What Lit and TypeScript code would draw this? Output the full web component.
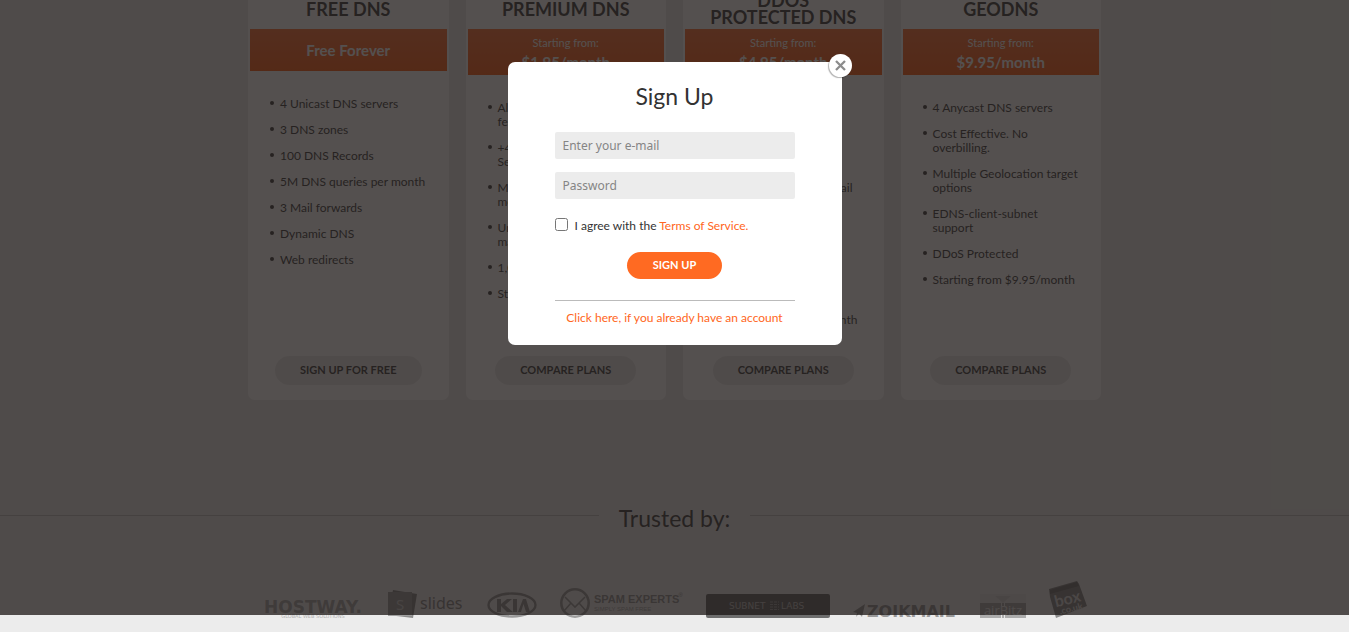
import { LitElement, html, css, svg, nothing } from "lit";
import { customElement, property, state } from "lit/decorators.js";

interface Plan {
  name: string[];
  from?: string;
  price: string;
  features: string[][];
  action: string;
}

const PLANS: Plan[] = [
  {
    name: ["FREE DNS"],
    price: "Free Forever",
    features: [
      ["4 Unicast DNS servers"],
      ["3 DNS zones"],
      ["100 DNS Records"],
      ["5M DNS queries per month"],
      ["3 Mail forwards"],
      ["Dynamic DNS"],
      ["Web redirects"],
    ],
    action: "SIGN UP FOR FREE",
  },
  {
    name: ["PREMIUM DNS"],
    from: "Starting from:",
    price: "$1.95/month",
    features: [
      ["All Free DNS", "features"],
      ["+45 Anycast DNS", "Servers"],
      ["Millions of queries per", "month"],
      ["Unlimited DNS records,", "mail forwards"],
      ["1,000% Uptime SLA"],
      ["Starting from $1.95/month"],
    ],
    action: "COMPARE PLANS",
  },
  {
    name: ["DDOS", "PROTECTED DNS"],
    from: "Starting from:",
    price: "$4.95/month",
    features: [
      ["All Premium DNS", "features"],
      ["DDoS protected DNS", "servers"],
      ["Unlimited DNS and E-mail", "forwards"],
      ["Unlimited DNS", "queries"],
      ["10,000% SLA"],
      ["24/7 Live Support"],
      ["Starting from $4.95/month"],
    ],
    action: "COMPARE PLANS",
  },
  {
    name: ["GEODNS"],
    from: "Starting from:",
    price: "$9.95/month",
    features: [
      ["4 Anycast DNS servers"],
      ["Cost Effective. No", "overbilling."],
      ["Multiple Geolocation target", "options"],
      ["EDNS-client-subnet", "support"],
      ["DDoS Protected"],
      ["Starting from $9.95/month"],
    ],
    action: "COMPARE PLANS",
  },
];

const lines = (parts: string[]) => parts.map((p, i) => html`${i ? html`<br />` : nothing}${p}`);

@customElement("plan-card")
export class PlanCard extends LitElement {
  @property({ attribute: false }) plan!: Plan;

  static styles = css`
    :host {
      display: flex;
      flex-direction: column;
      align-items: center;
      box-sizing: border-box;
      padding: 20px 2px 15px;
      background: #fff;
      border-radius: 7px;
    }
    .name {
      display: flex;
      align-items: center;
      height: 40px;
      margin: 0;
      font-size: 18px;
      line-height: 17px;
      font-weight: 700;
      text-align: center;
    }
    .price {
      align-self: stretch;
      padding: 11px 0;
      background: linear-gradient(#ff7840, #ff6622);
      color: #fff;
      font-size: 15px;
      line-height: 20px;
      font-weight: 700;
      text-align: center;
    }
    .price.two {
      padding: 5px 0 3px;
    }
    .from {
      display: block;
      font-size: 11px;
      line-height: 18px;
      font-weight: 400;
    }
    .features {
      align-self: stretch;
      flex: 1;
      margin: 26px 0 0;
      padding: 0 0 0 30px;
      list-style: none;
    }
    .features li {
      position: relative;
      margin-bottom: 12px;
      font-size: 12px;
      line-height: 14px;
      white-space: nowrap;
    }
    .features li::before {
      content: "";
      position: absolute;
      left: -10px;
      top: 4px;
      width: 4px;
      height: 4px;
      border-radius: 50%;
      background: #4a4a4a;
    }
    .action {
      box-sizing: border-box;
      height: 29px;
      padding: 0 25px;
      border-radius: 15px;
      background: #ececec;
      color: inherit;
      font-size: 11px;
      line-height: 27px;
      font-weight: 700;
      text-decoration: none;
    }
  `;

  render() {
    const p = this.plan;
    return html`
      <h3 class="name"><span>${lines(p.name)}</span></h3>
      <div class="price ${p.from ? "two" : ""}">
        ${p.from ? html`<span class="from">${p.from}</span>` : nothing}${p.price}
      </div>
      <ul class="features">
        ${p.features.map((f) => html`<li>${lines(f)}</li>`)}
      </ul>
      <a class="action" href="#plans">${p.action}</a>
    `;
  }
}

const LOGOS = [
  {
    label: "Hostway",
    w: 103,
    h: 18,
    art: svg`
      <text x="51" y="13" text-anchor="middle" font-family="DejaVu Sans, sans-serif" font-weight="700" font-size="17" fill="#aaa">HOSTWAY.</text>
      <text x="51" y="18" text-anchor="middle" font-family="DejaVu Sans, sans-serif" font-size="5" fill="#b4b4b4">GLOBAL  WEB  SOLUTIONS</text>`,
  },
  {
    label: "Slides",
    w: 76,
    h: 28,
    art: svg`
      <path d="M5 0 29 4 25 28 0 25z" fill="#8c8c8c"/>
      <path d="M0 2h24v24H0z" fill="#a0a0a0"/>
      <text x="12" y="20" text-anchor="middle" font-family="Noto Sans, sans-serif" font-size="15" fill="#cfcfcf">S</text>
      <text x="32" y="19" font-family="Noto Sans, sans-serif" font-size="16" fill="#8c8c8c">slides</text>`,
  },
  {
    label: "KIA",
    w: 50,
    h: 26,
    art: svg`
      <ellipse cx="25" cy="13" rx="23.5" ry="11.5" fill="none" stroke="#999" stroke-width="2.4"/>
      <path d="M10 7h4v5l6-5h5l-7 6 8 7h-6l-6-6v6h-4zM26 7h4v13h-4zM31 20l5-13h3l4 13h-4l-2.500-8-2.500 8z" fill="#999"/>`,
  },
  {
    label: "Spam Experts",
    w: 123,
    h: 30,
    art: svg`
      <circle cx="15" cy="15" r="13.700" fill="none" stroke="#a0a0a0" stroke-width="2.600"/>
      <path d="M5 9l10 10L25 9M4 23l7-8M26 23l-7-8" fill="none" stroke="#a0a0a0" stroke-width="1.600"/>
      <text x="34" y="15" font-family="Liberation Sans, sans-serif" font-size="11" font-weight="700" fill="#999">SPAM EXPERTS</text>
      <text x="123" y="9" text-anchor="end" font-family="Liberation Sans, sans-serif" font-size="6" fill="#999">®</text>
      <text x="34" y="23" font-family="Liberation Sans, sans-serif" font-size="6" fill="#aaa">SIMPLY SPAM FREE</text>`,
  },
  {
    label: "Subnet Labs",
    w: 124,
    h: 24,
    art: svg`
      <rect width="124" height="24" rx="2" fill="#6e6e6e"/>
      <text x="23" y="15" font-family="DejaVu Sans, sans-serif" font-size="9" fill="#c0c0c0">SUBNET</text>
      <path d="M64 8h9M64 10.500h9M64 13h9M64 15.500h9" stroke="#a0a0a0" stroke-width="1" stroke-dasharray="3 1"/>
      <text x="75" y="15" font-family="DejaVu Sans, sans-serif" font-size="9" fill="#c0c0c0">LABS</text>`,
  },
  {
    label: "Zoikmail",
    w: 104,
    h: 16,
    art: svg`
      <path d="M0 10 12 2 9 15 6 11.500 3 15 4 11z" fill="#999"/>
      <text x="14" y="15" font-family="DejaVu Sans, sans-serif" font-weight="700" font-size="16" fill="#999">ZOIKMAIL</text>`,
  },
  {
    label: "airBitz",
    w: 46,
    h: 24,
    art: svg`
      <path d="M0 0h46v9H0z" fill="#e4e4e4"/>
      <path d="M15 2h16l-8 7z" fill="#d4d4d4"/>
      <path d="M0 9h46v15H0z" fill="#acacac"/>
      <path d="M21.500 9v3M24.500 9v3M21.500 21v3M24.500 21v3" stroke="#e8e8e8" stroke-width="1"/>
      <text x="23" y="21" text-anchor="middle" font-family="Open Sans, sans-serif" font-size="13" fill="#e8e8e8">airBitz</text>`,
  },
  {
    label: "box.co.uk",
    w: 38,
    h: 37,
    art: svg`
      <path d="M0 8 28 0l2 3 8 22-31 12L1 16z" fill="#8c8c8c"/>
      <path d="M1 9 28 1l2 4-29 8z" fill="#787878"/>
      <g transform="rotate(-14 20 20)" font-family="Lato, sans-serif" font-weight="700" text-anchor="middle" fill="#dcdcdc">
        <text x="19" y="23" font-size="16">box</text>
        <text x="20" y="31" font-size="9">.co.uk</text>
      </g>`,
  },
];

@customElement("sign-up-dialog")
export class SignUpDialog extends LitElement {
  static styles = css`
    :host {
      display: block;
      position: relative;
      box-sizing: border-box;
      width: 334px;
      max-width: 100%;
      padding: 19px 47px;
      background: #fff;
      border-radius: 7px;
      color: #333;
    }
    h2 {
      margin: 0 0 21px;
      font-size: 23px;
      line-height: 30px;
      font-weight: 400;
      text-align: center;
    }
    form {
      display: flex;
      flex-direction: column;
    }
    .field {
      box-sizing: border-box;
      width: 100%;
      height: 27px;
      margin: 0 0 13px;
      padding: 0 8px;
      border: 0;
      border-radius: 2px;
      background: #ececec;
      font: 12px "Noto Sans", sans-serif;
      color: #333;
    }
    .field::placeholder {
      color: #858585;
      opacity: 1;
    }
    .agree {
      display: flex;
      align-items: center;
      gap: 7px;
      margin: 5px 0 18px;
      font-size: 12px;
      line-height: 17px;
    }
    .agree input {
      width: 13px;
      height: 13px;
      margin: 0 0 3px;
    }
    a {
      color: #ff6622;
      text-decoration: none;
    }
    .submit {
      align-self: center;
      height: 27px;
      padding: 0 26px 2px;
      border: 0;
      border-radius: 14px;
      background: #ff6a22;
      color: #fff;
      font: 700 11px Lato, sans-serif;
      cursor: pointer;
    }
    .login {
      margin: 21px 0 0;
      padding-top: 9px;
      border-top: 1px solid #bbb;
      font-size: 12px;
      line-height: 16px;
      text-align: center;
    }
    .close {
      position: absolute;
      top: -8px;
      right: -10px;
      display: grid;
      place-items: center;
      width: 23px;
      height: 23px;
      padding: 0;
      border: 0;
      border-radius: 50%;
      background: #fff;
      box-shadow: -1px 1px 1px rgba(0, 0, 0, 0.3);
      cursor: pointer;
    }
  `;

  private close() {
    this.dispatchEvent(new CustomEvent("dismiss"));
  }

  render() {
    return html`
      <h2>Sign Up</h2>
      <form @submit=${(e: Event) => e.preventDefault()}>
        <input class="field" type="email" aria-label="E-mail" placeholder="Enter your e-mail" />
        <input class="field" type="password" aria-label="Password" placeholder="Password" />
        <div class="agree">
          <input type="checkbox" id="agree" />
          <label for="agree">I agree with the <a href="#terms">Terms of Service.</a></label>
        </div>
        <button class="submit" type="submit">SIGN UP</button>
      </form>
      <p class="login"><a href="#login">Click here, if you already have an account</a></p>
      <button class="close" type="button" aria-label="Close" @click=${this.close}>
        <svg width="11" height="11" viewBox="0 0 11 11">
          <path d="M1 1l9 9M10 1l-9 9" stroke="#8c8c8c" stroke-width="2.300" />
        </svg>
      </button>
    `;
  }
}

@customElement("app-root")
export class AppRoot extends LitElement {
  @state() private open = true;

  static styles = css`
    :host {
      display: block;
      position: relative;
      height: 100vh;
      overflow: hidden;
      background: #ececec;
      color: #4a4a4a;
      font-family: Lato, sans-serif;
    }
    .page {
      margin-top: -31px;
    }
    .plans {
      display: grid;
      grid-template-columns: repeat(4, 1fr);
      gap: 17px;
      max-width: 853px;
      min-height: 431px;
      margin: 0 auto;
    }
    .trusted {
      display: flex;
      align-items: center;
      gap: 20px;
      margin: 103px 0 0;
      font-size: 23px;
      line-height: 30px;
      font-weight: 400;
    }
    .trusted::before,
    .trusted::after {
      content: "";
      flex: 1;
      height: 1px;
      margin-bottom: 6px;
      background: #c4c4c4;
    }
    .logos {
      display: flex;
      justify-content: space-between;
      align-items: flex-end;
      max-width: 825px;
      margin: 48px auto 0;
    }
    .logos svg {
      display: block;
    }
    .shade {
      position: absolute;
      inset: 0 0 17px;
      display: flex;
      justify-content: center;
      align-items: flex-start;
      padding-top: 62px;
      background: rgba(27, 22, 20, 0.75);
    }
  `;

  render() {
    return html`
      <main class="page">
        <section class="plans">
          ${PLANS.map((p) => html`<plan-card .plan=${p}></plan-card>`)}
        </section>
        <h2 class="trusted">Trusted by:</h2>
        <div class="logos">
          ${LOGOS.map(
            (l) => html`<svg role="img" aria-label=${l.label} width=${l.w} height=${l.h} viewBox="0 0 ${l.w} ${l.h}">${l.art}</svg>`,
          )}
        </div>
      </main>
      ${this.open
        ? html`<div class="shade">
            <sign-up-dialog role="dialog" aria-label="Sign Up" @dismiss=${() => (this.open = false)}></sign-up-dialog>
          </div>`
        : nothing}
    `;
  }
}
